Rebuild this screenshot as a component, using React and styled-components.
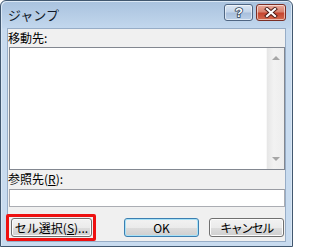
import React from "react";
import styled, { createGlobalStyle } from "styled-components";

const GlobalStyle = createGlobalStyle`
  html, body {
    margin: 0;
    padding: 0;
    background: #ffffff;
  }
  body {
    font-family: "Noto Sans CJK JP", "Liberation Sans", sans-serif;
  }
`;

const Window = styled.div`
  box-sizing: border-box;
  width: 293px;
  height: 247px;
  display: flex;
  flex-direction: column;
  padding: 0 6px 4px 6px;
  border: 1px solid #41576f;
  border-radius: 6px 6px 0 0;
  background: linear-gradient(#a9c2de 0px, #c2d7ed 27px, #c8dbef 28px, #c8dbef 100%);
  box-shadow: inset 1px 1px 0 #dbe8f5, inset -1px 0 0 #dbe8f5;
`;

const TitleBar = styled.div`
  height: 27px;
  display: flex;
  align-items: flex-start;
  flex-shrink: 0;
`;

const Title = styled.div`
  flex: 1;
  font-size: 13px;
  line-height: 17px;
  padding: 5px 0 0 1px;
  color: #111a2a;
`;

const CaptionButton = styled.div`
  box-sizing: border-box;
  width: ${(p) => p.$w}px;
  height: 17px;
  margin-top: 3px;
  margin-left: ${(p) => p.$ml || 0}px;
  border: 1px solid ${(p) => (p.$close ? "#7a2e25" : "#4f6683")};
  border-radius: 3px;
  display: flex;
  align-items: center;
  justify-content: center;
  background: ${(p) =>
    p.$close
      ? "linear-gradient(#e9a99b 0%, #d8836f 45%, #c6452f 55%, #d36b4f 100%)"
      : "linear-gradient(#dbe6f3 0%, #c4d5ea 45%, #a9bfdc 55%, #bcd0e8 100%)"};
  box-shadow: inset 0 0 0 1px rgba(255, 255, 255, 0.55);
`;

const Content = styled.div`
  flex: 1;
  display: flex;
  flex-direction: column;
  background: #f0f0f0;
  border: 1px solid #97adc7;
  padding: 1px 0 0 0;
`;

const Label = styled.div`
  font-size: 12px;
  line-height: 15px;
  color: #000;
  margin-top: ${(p) => p.$mt || 0}px;
  padding-left: 0;
  u {
    text-decoration: underline;
    text-underline-offset: 1px;
  }
`;

const ListBox = styled.div`
  box-sizing: border-box;
  height: 123px;
  margin: 2px 0 0 1px;
  border: 1px solid #828790;
  background: #ffffff;
  display: flex;
  justify-content: flex-end;
`;

const ScrollBar = styled.div`
  width: 17px;
  display: flex;
  flex-direction: column;
  justify-content: space-between;
  align-items: center;
  padding: 8px 0 8px 0;
  background: linear-gradient(90deg, #e6e6e6, #f2f2f2 40%, #ededed);
  border-left: 1px solid #f8f8f8;
`;

const Arrow = styled.div`
  width: 0;
  height: 0;
  border-left: 4px solid transparent;
  border-right: 4px solid transparent;
  ${(p) =>
    p.$down
      ? "border-top: 4px solid #a6a6a6;"
      : "border-bottom: 4px solid #a6a6a6;"}
`;

const TextBox = styled.div`
  box-sizing: border-box;
  height: 18px;
  margin: 3px 0 0 1px;
  border: 1px solid #abadb3;
  border-top-color: #9a9ca3;
  background: #ffffff;
`;

const ButtonRow = styled.div`
  display: flex;
  justify-content: space-between;
  align-items: center;
  margin: 7px 1px 0 -2px;
`;

const Highlight = styled.div`
  border: 3px solid #ee1111;
  border-radius: 2px;
  padding: 1px 1px 1px 2px;
  display: flex;
`;

const ButtonGroup = styled.div`
  display: flex;
  gap: 10px;
`;

const Button = styled.div`
  box-sizing: border-box;
  width: ${(p) => p.$w}px;
  height: 19px;
  display: flex;
  align-items: center;
  justify-content: center;
  font-size: 12px;
  letter-spacing: ${(p) => p.$ls || 0}px;
  color: #000;
  border: 1px solid ${(p) => (p.$default ? "#3c7fb1" : "#707070")};
  border-radius: 3px;
  background: linear-gradient(#f2f2f2 0%, #ebebeb 50%, #dddddd 51%, #cfcfcf 100%);
  box-shadow: inset 0 0 0 1px ${(p) => (p.$default ? "#a8e2f7" : "#fcfcfc")};
  u {
    text-decoration: underline;
    text-underline-offset: 1px;
  }
`;

function HelpGlyph() {
  return (
    <svg width="12" height="13" viewBox="0 0 12 13">
      <text
        x="6"
        y="11"
        textAnchor="middle"
        fontSize="13"
        fontWeight="bold"
        fontFamily="Liberation Sans, sans-serif"
        fill="#ffffff"
        stroke="#2b3f57"
        strokeWidth="1.6"
        paintOrder="stroke"
      >
        ?
      </text>
    </svg>
  );
}

function CloseGlyph() {
  return (
    <svg width="14" height="11" viewBox="0 0 14 11">
      <path d="M3 2 L11 9 M11 2 L3 9" stroke="#4a1a14" strokeWidth="4" strokeLinecap="square" />
      <path d="M3 2 L11 9 M11 2 L3 9" stroke="#ffffff" strokeWidth="2.2" strokeLinecap="square" />
    </svg>
  );
}

export default function App() {
  return (
    <>
      <GlobalStyle />
      <Window>
        <TitleBar>
          <Title>ジャンプ</Title>
          <CaptionButton $w={29}>
            <HelpGlyph />
          </CaptionButton>
          <CaptionButton $w={30} $ml={3} $close>
            <CloseGlyph />
          </CaptionButton>
        </TitleBar>
        <Content>
          <Label>移動先:</Label>
          <ListBox>
            <ScrollBar>
              <Arrow />
              <Arrow $down />
            </ScrollBar>
          </ListBox>
          <Label $mt={1}>
            参照先(<u>R</u>):
          </Label>
          <TextBox />
          <ButtonRow>
            <Highlight>
              <Button $w={81}>
                セル選択(<u>S</u>)...
              </Button>
            </Highlight>
            <ButtonGroup>
              <Button $w={75} $default>
                OK
              </Button>
              <Button $w={75} $ls={-1.5}>
                キャンセル
              </Button>
            </ButtonGroup>
          </ButtonRow>
        </Content>
      </Window>
    </>
  );
}
